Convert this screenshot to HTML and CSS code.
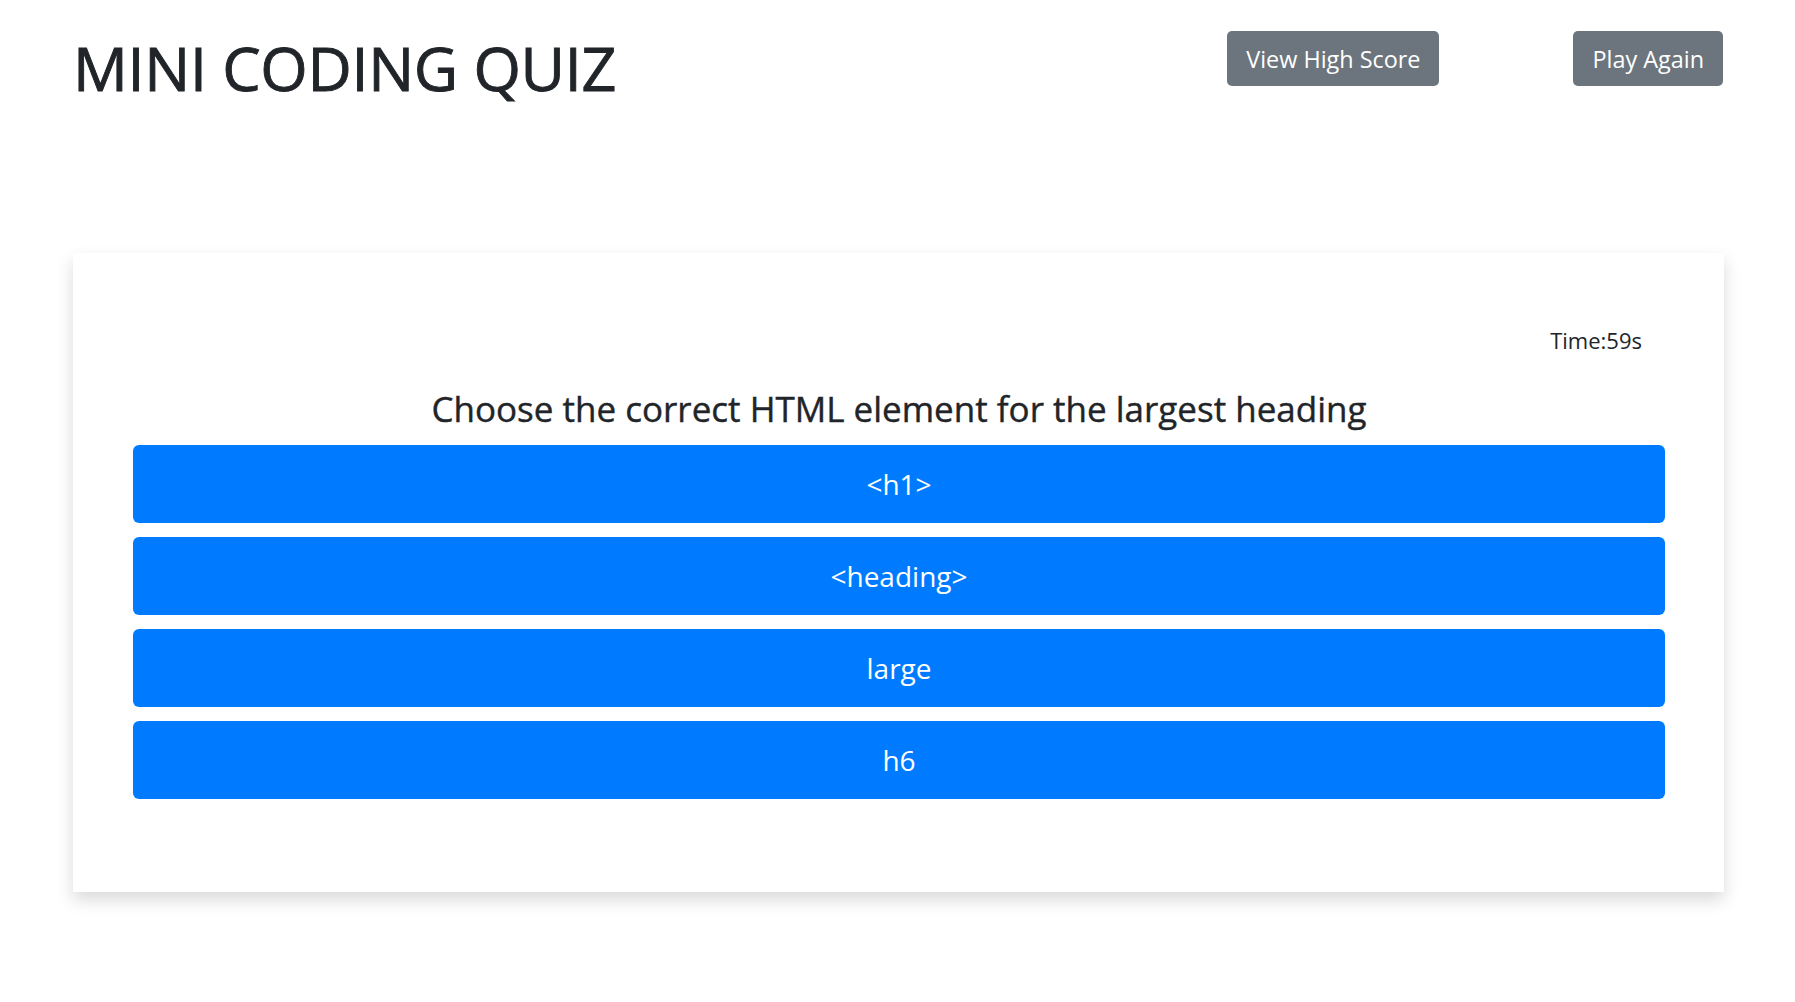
FILE: index.html
```html
<!DOCTYPE html>
<html lang="en">
<head>
<meta charset="utf-8">
<title>Mini Coding Quiz</title>
<link rel="stylesheet" href="styles.css">
</head>
<body>
<header class="topbar">
  <h1 class="title">MINI CODING QUIZ</h1>
  <div class="actions">
    <button class="btn btn-gray">View High Score</button>
    <button class="btn btn-gray">Play Again</button>
  </div>
</header>
<main class="card">
  <div class="timer-row"><span class="timer">Time:59s</span></div>
  <h2 class="question">Choose the correct HTML element for the largest heading</h2>
  <div class="answers">
    <button class="answer">&lt;h1&gt;</button>
    <button class="answer">&lt;heading&gt;</button>
    <button class="answer">large</button>
    <button class="answer">h6</button>
  </div>
</main>
</body>
</html>
```
FILE: styles.css
```css
* { box-sizing: border-box; }
html, body { margin: 0; padding: 0; background: #fff; }
body {
  font-family: "Open Sans", "Noto Sans", "Liberation Sans", sans-serif;
  color: #212529;
  padding-bottom: 60px;
}
.topbar {
  display: flex;
  justify-content: space-between;
  align-items: flex-start;
  padding: 0 72px 0 73px;
  height: 253px;
}
.title {
  margin: 32px 0 0 0;
  font-size: 61px;
  line-height: 72px;
  font-weight: 400;
  letter-spacing: -0.3px;
  -webkit-text-stroke: 0.9px #212529;
}
.actions {
  display: flex;
  gap: 134px;
  margin-top: 31px;
}
.btn {
  font-family: inherit;
  font-size: 23.4px;
  height: 55px;
  padding: 0 19px;
  border: none;
  border-radius: 5px;
  color: #fff;
  cursor: pointer;
}
.btn-gray { background: #6c757d; }
.card {
  margin: 0 71px 0 73px;
  width: 1651px;
  height: 639px;
  background: #fff;
  box-shadow: 0 8px 16px rgba(0,0,0,0.15);
  padding: 72px 59px 92px 60px;
  display: flex;
  flex-direction: column;
}
.timer-row {
  display: flex;
  justify-content: flex-end;
  padding-right: 23px;
}
.timer {
  font-size: 22px;
  line-height: 30px;
  font-weight: 400;
}
.question {
  margin: 32px 0 14px;
  text-align: center;
  font-size: 35px;
  line-height: 44px;
  font-weight: 400;
  -webkit-text-stroke: 0.4px #212529;
}
.answers {
  display: flex;
  flex-direction: column;
  gap: 14px;
}
.answer {
  font-family: inherit;
  height: 78px;
  border: none;
  border-radius: 6px;
  background: #007bff;
  color: #fff;
  font-size: 28px;
  cursor: pointer;
}
```
